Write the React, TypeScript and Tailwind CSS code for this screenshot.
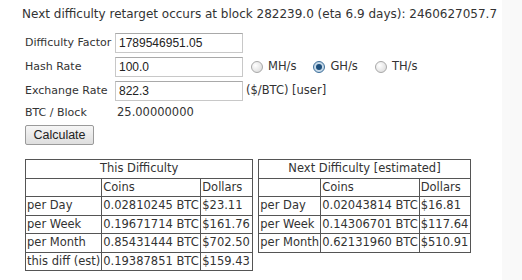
import React from 'react';

const rows1 = [
  ['per Day', '0.02810245 BTC', '$23.11'],
  ['per Week', '0.19671714 BTC', '$161.76'],
  ['per Month', '0.85431444 BTC', '$702.50'],
  ['this diff (est)', '0.19387851 BTC', '$159.43'],
];

const rows2 = [
  ['per Day', '0.02043814 BTC', '$16.81'],
  ['per Week', '0.14306701 BTC', '$117.64'],
  ['per Month', '0.62131960 BTC', '$510.91'],
];

function Radio({ checked, label }: { checked?: boolean; label: string }) {
  return (
    <span className="inline-flex items-center gap-[5px]">
      <span
        className={
          'w-[12px] h-[12px] rounded-full border flex items-center justify-center ' +
          (checked
            ? 'border-[#3d6f9a] bg-[radial-gradient(circle,#dbe9f4,#b6cde0)]'
            : 'border-[#a8a8a8] bg-[radial-gradient(circle_at_35%_35%,#ffffff,#d6d6d6)]')
        }
      >
        {checked && <span className="w-[6px] h-[6px] rounded-full bg-[#1d4f7c]" />}
      </span>
      <span>{label}</span>
    </span>
  );
}

function Field({ value }: { value: string }) {
  return (
    <div className="w-[128px] shrink-0 h-[20px] border border-[#c8c8c8] border-t-[#a9a9a9] bg-white px-[3px] flex items-center font-['Liberation_Sans',Arial,sans-serif] text-[12px] text-[#222]">
      {value}
    </div>
  );
}

function ResultTable({ title, rows, widths }: { title: string; rows: string[][]; widths: string[] }) {
  const cell = 'border border-[#555] px-[1px] h-[18.5px] leading-none whitespace-nowrap';
  return (
    <table className="border-collapse border border-[#555] self-start text-[11.5px]">
      <tbody>
        <tr>
          <td colSpan={3} className={cell + ' text-center'}>
            {title}
          </td>
        </tr>
        <tr>
          <td className={cell + ' ' + widths[0]}></td>
          <td className={cell + ' ' + widths[1]}>Coins</td>
          <td className={cell + ' ' + widths[2]}>Dollars</td>
        </tr>
        {rows.map((r) => (
          <tr key={r[0]}>
            <td className={cell}>{r[0]}</td>
            <td className={cell}>{r[1]}</td>
            <td className={cell}>{r[2]}</td>
          </tr>
        ))}
      </tbody>
    </table>
  );
}

export default function App() {
  return (
    <div className="w-[522px] h-[280px] flex overflow-hidden font-['DejaVu_Sans',Verdana,sans-serif] text-[11.5px] text-[#333]">
      <div className="w-[502px] bg-white pl-[22px] pt-[7px]">
        <div className="text-[12px] leading-[14px]">
          Next difficulty retarget occurs at block 282239.0 (eta 6.9 days): 2460627057.7
        </div>

        <div className="pl-[3px] mt-[12px] flex flex-col gap-[4px]">
          <div className="flex items-center">
            <span className="w-[90px] shrink-0 whitespace-nowrap text-[11px]">Difficulty Factor</span>
            <Field value="1789546951.05" />
          </div>
          <div className="flex items-center">
            <span className="w-[90px] shrink-0 text-[11px]">Hash Rate</span>
            <Field value="100.0" />
            <div className="ml-[8px] flex items-center gap-[17px]">
              <Radio label="MH/s" />
              <Radio checked label="GH/s" />
              <Radio label="TH/s" />
            </div>
          </div>
          <div className="flex items-center">
            <span className="w-[90px] shrink-0 whitespace-nowrap text-[11px]">Exchange Rate</span>
            <Field value="822.3" />
            <span className="ml-[3px]">($/BTC) [user]</span>
          </div>
          <div className="flex items-center h-[16px]">
            <span className="w-[92px] text-[11px]">BTC / Block</span>
            <span>25.00000000</span>
          </div>
          <div>
            <button className="w-[69px] h-[20px] border border-[#9a9a9a] rounded-[2px] bg-[linear-gradient(#f6f6f6,#dedede)] text-[12.5px] font-['Liberation_Sans',Arial,sans-serif] text-[#222]">
              Calculate
            </button>
          </div>
        </div>

        <div className="flex gap-[5px] mt-[14px] pl-[3px]">
          <ResultTable title="This Difficulty" rows={rows1} widths={['w-[75px]', 'w-[99px]', 'w-[52px]']} />
          <ResultTable title="Next Difficulty [estimated]" rows={rows2} widths={['w-[62px]', 'w-[98px]', 'w-[51px]']} />
        </div>
      </div>
      <div className="flex-1 bg-[#f9f9f9]" />
    </div>
  );
}
